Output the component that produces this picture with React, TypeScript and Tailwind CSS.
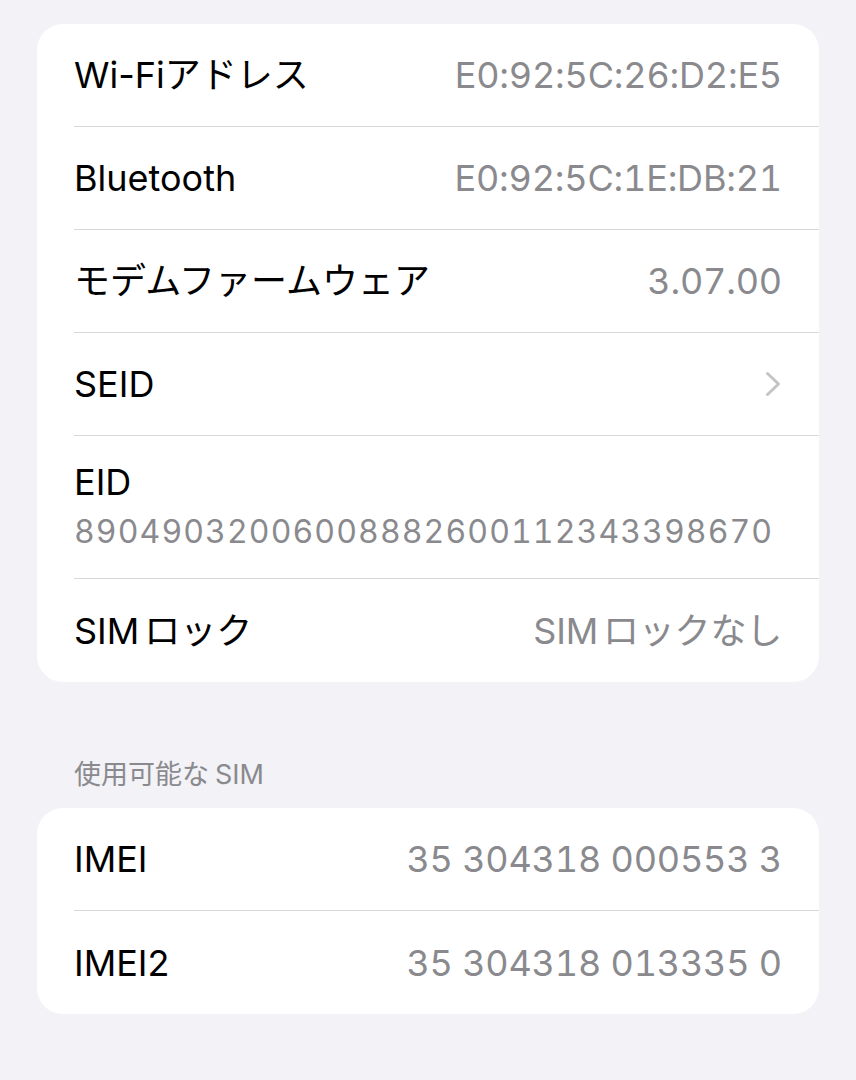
import type { ReactNode } from "react";

const font = { fontFamily: '"Inter", "Noto Sans CJK JP", sans-serif' };

function Chevron() {
  return (
    <svg width="16" height="26" viewBox="0 0 16 26" fill="none" className="mr-[1px]">
      <path d="M2.5 2.5 13.5 13 2.5 23.5" stroke="#c4c4c7" strokeWidth="3" strokeLinecap="round" strokeLinejoin="round" />
    </svg>
  );
}

function Row({
  label,
  value,
  chevron,
  last,
}: {
  label: ReactNode;
  value?: ReactNode;
  chevron?: boolean;
  last?: boolean;
}) {
  return (
    <div className="pl-[37px]">
      <div
        className={
          "flex h-[103px] items-center justify-between pr-[37px] " +
          (last ? "h-[102px]" : "border-b border-[#d8d8dc]")
        }
      >
        <span className="text-[36px] text-black">{label}</span>
        {chevron ? (
          <Chevron />
        ) : (
          <span className="text-[36px] tracking-[-0.2px] text-[#8a8a8e] tabular-nums">{value}</span>
        )}
      </div>
    </div>
  );
}

export default function App() {
  return (
    <div className="min-h-[1080px] bg-[#f2f2f7] px-[37px] pt-[24px]" style={font}>
      <div className="overflow-hidden rounded-[26px] bg-white">
        <Row label="Wi-Fiアドレス" value="E0:92:5C:26:D2:E5" />
        <Row label="Bluetooth" value="E0:92:5C:1E:DB:21" />
        <Row label="モデムファームウェア" value="3.07.00" />
        <Row label="SEID" chevron />
        <div className="pl-[37px]">
          <div className="flex h-[143px] flex-col justify-center border-b border-[#d8d8dc] pr-[37px]">
            <span className="text-[36px] leading-[44px] text-black">EID</span>
            <span className="mt-[6px] text-[32px] leading-[44px] tracking-[1.1px] text-[#8a8a8e] tabular-nums">
              89049032006008882600112343398670
            </span>
          </div>
        </div>
        <Row
          label={
            <>
              SIM<span className="ml-[5px]">ロック</span>
            </>
          }
          value={
            <>
              SIM<span className="ml-[5px]">ロックなし</span>
            </>
          }
          last
        />
      </div>

      <div className="mt-[76px] pl-[37px] text-[27px] leading-[34px] text-[#8a8a8e]">
        使用可能な<span className="ml-[6px]">SIM</span>
      </div>

      <div className="mt-[16px] overflow-hidden rounded-[26px] bg-white">
        <Row label="IMEI" value="35 304318 000553 3" />
        <Row label="IMEI2" value="35 304318 013335 0" last />
      </div>
    </div>
  );
}
